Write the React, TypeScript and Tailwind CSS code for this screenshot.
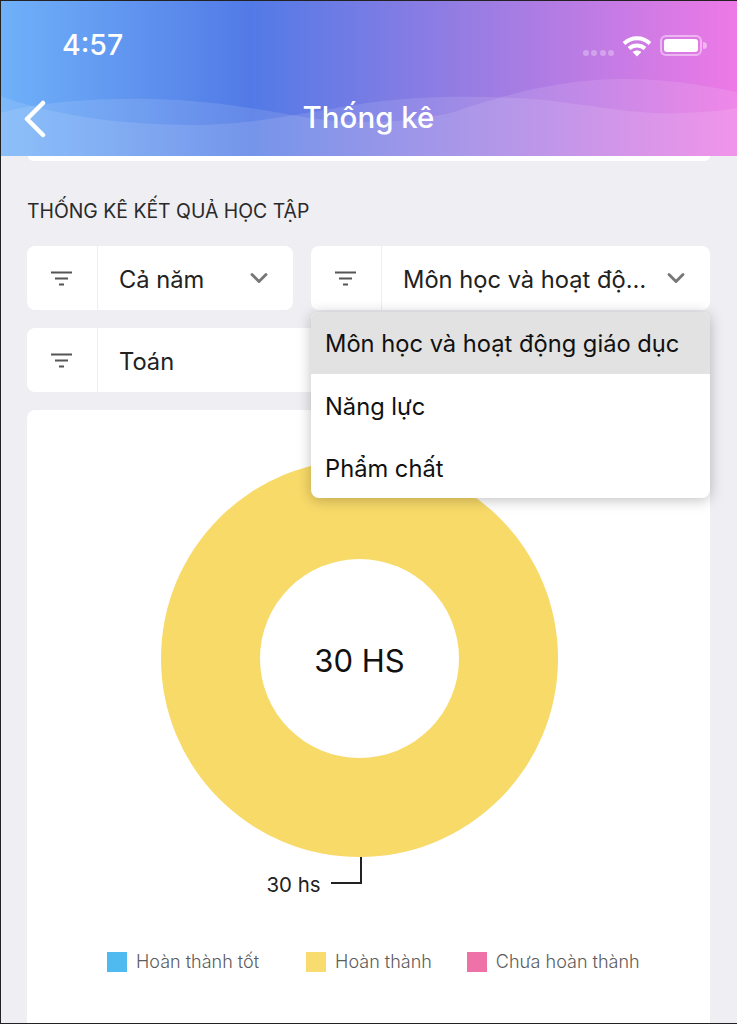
import { ChevronDown } from "lucide-react";

function FilterIcon() {
  return (
    <svg className="mr-[1px]" width="21" height="15" viewBox="0 0 21 15" fill="none" stroke="#555" strokeWidth="2.2">
      <path d="M0 1.5h21M4 7.5h13M8 13.5h5" />
    </svg>
  );
}

function Filter({ label, className, chevron = true }: { label: string; className: string; chevron?: boolean }) {
  return (
    <div className={`flex h-16 items-stretch rounded-lg bg-white ${className}`}>
      <div className="flex w-[71px] shrink-0 items-center justify-center border-r border-[#eeeef2]">
        <FilterIcon />
      </div>
      <div className="flex min-w-0 flex-1 items-center pl-[21px] pr-[20px]">
        <span className="flex-1 whitespace-nowrap pt-[3px] text-[23.7px] leading-[30px] text-[#222]">{label}</span>
        {chevron && <ChevronDown size={28} strokeWidth={2.5} className="text-[#777]" />}
      </div>
    </div>
  );
}

function Legend({ color, label }: { color: string; label: string }) {
  return (
    <div className="flex items-center gap-[9px]">
      <div className={`h-5 w-5 ${color}`} />
      <span className="text-[18px] font-light leading-none text-[#5c5c5c]">{label}</span>
    </div>
  );
}

export default function App() {
  return (
    <div className="relative h-[1024px] w-[737px] overflow-hidden border-t border-b border-l border-[#222] bg-[#eeeef3] font-['Inter',sans-serif]">
      <header className="relative h-[155px] bg-[linear-gradient(90deg,#6fb1f9_0%,#527ae6_34%,#9a7de3_65%,#ee79e6_100%)] text-white">
        <svg className="absolute left-[-1px] top-[-1px] h-[156px] w-[737px]" viewBox="0 0 737 156" preserveAspectRatio="none">
          <path d="M0 96C60 118 130 125 193 125C250 125 290 115 367 103C420 96 470 96 517 98C570 100 630 116 684 113C705 112 720 111 737 108V156H0Z" fill="#fff" fillOpacity="0.11" />
          <path d="M0 113C45 101 100 98 150 99C220 100 270 112 310 118C340 122 350 122 367 122C400 122 430 118 454 112C490 100 550 80 617 79C660 78 700 84 737 92V156H0Z" fill="#fff" fillOpacity="0.11" />
        </svg>
        <div className="relative flex h-[89px] items-center justify-between pl-[61px] pr-[30px]">
          <span className="text-[28.5px] font-medium leading-none">4:57</span>
          <div className="flex items-center">
            <div className="mt-[15px] flex gap-[2.5px]">
              <div className="h-[6px] w-[6px] rounded-full bg-white/30" />
              <div className="h-[6px] w-[6px] rounded-full bg-white/30" />
              <div className="h-[6px] w-[6px] rounded-full bg-white/30" />
              <div className="h-[6px] w-[6px] rounded-full bg-white/30" />
            </div>
            <svg className="ml-[8px]" width="30" height="22" viewBox="0 0 30 22" fill="none">
              <path d="M2 8.5C9.5 1.5 20.5 1.5 28 8.5M7 13.5C11.5 9.5 18.5 9.5 23 13.5" stroke="#fff" strokeWidth="3.8" />
              <path d="M15 21.5l-4.4-4.6c2.6-2 6.2-2 8.8 0z" fill="#fff" />
            </svg>
            <div className="ml-[8px] flex items-center gap-[1px]">
              <div className="flex h-[21px] w-[42px] items-center justify-center rounded-[6px] border-2 border-white/45">
                <div className="h-[13px] w-[34px] rounded-[3px] bg-white" />
              </div>
              <div className="h-[7px] w-1 rounded-r bg-white/45" />
            </div>
          </div>
        </div>
        <div className="relative flex h-[56px] items-center justify-center pr-[1px]">
          <svg className="absolute left-[22px] top-[10px]" width="24" height="38" viewBox="0 0 24 38" fill="none" stroke="#fff" strokeWidth="4.5" strokeLinecap="round" strokeLinejoin="round">
            <path d="M20 3L4 19l16 16" />
          </svg>
          <h1 className="text-[29.5px] font-medium leading-none">Thống kê</h1>
        </div>
      </header>

      <div className="mx-[27px] h-[5px] rounded-b-lg bg-white" />

      <main className="pl-[26px] pr-[27px] pt-[38px]">
        <h2 className="text-[19.4px] leading-[24px] text-[#2a2a2a]">THỐNG KÊ KẾT QUẢ HỌC TẬP</h2>

        <div className="mt-[23px] flex gap-[18px]">
          <Filter label="Cả năm" className="w-[266px] shrink-0" />
          <Filter label="Môn học và hoạt độ…" className="min-w-0 flex-1" />
        </div>
        <Filter label="Toán" className="mt-[18px]" chevron={false} />

        <section className="mt-[18px] flex h-[640px] flex-col items-center rounded-t-lg bg-white">
          <div className="relative mr-[18px] mt-[50px] h-[397px] w-[397px] shrink-0 rounded-full bg-[#f8da69]">
            <div className="absolute inset-[99px] flex items-center justify-center rounded-full bg-white pt-[3px] text-[31px] leading-none text-[#111]">30 HS</div>
          </div>
          <div className="mr-[109px] flex h-[27px] items-end">
            <span className="mb-[-11px] mr-[10px] text-[20.4px] leading-none text-[#222]">30 hs</span>
            <div className="h-[27px] w-[31px] border-b-2 border-r-2 border-[#222]" />
          </div>
          <div className="mt-[68px] flex w-full items-center pl-[80px]">
            <Legend color="bg-[#4fbaf0]" label="Hoàn thành tốt" />
            <div className="w-[47px]" />
            <Legend color="bg-[#f9dc6f]" label="Hoàn thành" />
            <div className="w-[35px]" />
            <Legend color="bg-[#ee72a8]" label="Chưa hoàn thành" />
          </div>
        </section>
      </main>

      <div className="absolute left-[310px] top-[311px] w-[399px] overflow-hidden rounded-lg bg-white text-[23.7px] leading-none text-[#111] shadow-[0_2px_14px_rgba(0,0,0,0.25)]">
        <div className="flex h-[62px] items-center bg-[#e2e2e2] pl-[14px] pt-[2px]">Môn học và hoạt động giáo dục</div>
        <div className="flex h-[62px] items-center pl-[14px] pt-[3px]">Năng lực</div>
        <div className="flex h-[62px] items-center pl-[14px] pt-[3px]">Phẩm chất</div>
      </div>
    </div>
  );
}
